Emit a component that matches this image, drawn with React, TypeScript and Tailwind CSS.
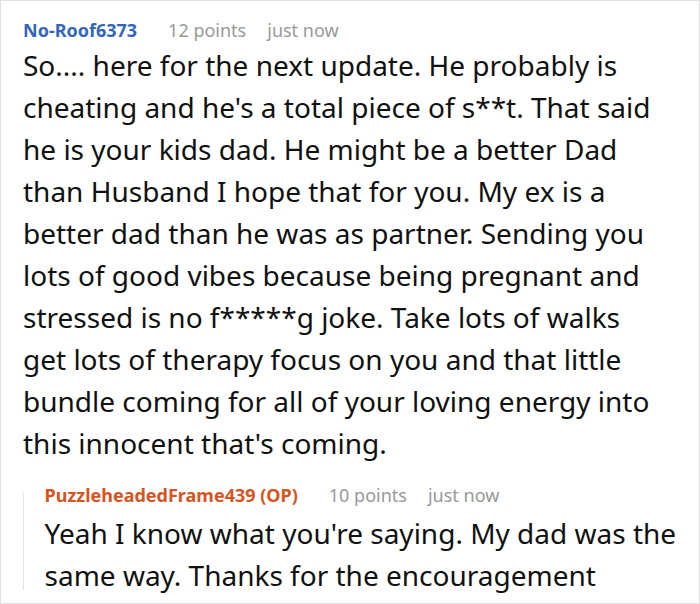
export default function App() {
  return (
    <div
      className="w-[700px] h-[604px] border border-[#e0e0e0] bg-white overflow-hidden pl-[22px] pr-[14px] pt-[17px]"
      style={{ fontFamily: '"Noto Sans", sans-serif' }}
    >
      <div className="flex items-center text-[18px] leading-[24px]">
        <span className="font-bold text-[#3366bb]">No-Roof6373</span>
        <span className="ml-[31px] text-[#999999]">12 points</span>
        <span className="ml-[21px] text-[#999999]">just now</span>
      </div>
      <p className="mt-[2px] mr-[25px] text-[28px] leading-[42px] text-[#111111]">
        So.... here for the next update. He probably is cheating and he's a total piece of s**t. That said he is your kids dad. He might be a better Dad than Husband I hope that for you. My ex is a better dad than he was as partner. Sending you lots of good vibes because being pregnant and stressed is no f*****g joke. Take lots of walks get lots of therapy focus on you and that little bundle coming for all of your loving energy into this innocent that's coming.
      </p>
      <div className="mt-[19px] flex">
        <div className="w-px bg-[#e3e3e3] mt-[10px] mb-[6px]" />
        <div className="pl-[21px]">
          <div className="flex items-center text-[18px] leading-[24px]">
            <span className="font-bold text-[#d9531e]">PuzzleheadedFrame439 (OP)</span>
            <span className="ml-[31px] text-[#999999]">10 points</span>
            <span className="ml-[21px] text-[#999999]">just now</span>
          </div>
          <p className="mt-[5px] text-[28px] leading-[42px] text-[#111111]">
            Yeah I know what you're saying. My dad was the same way. Thanks for the encouragement
          </p>
        </div>
      </div>
    </div>
  );
}
